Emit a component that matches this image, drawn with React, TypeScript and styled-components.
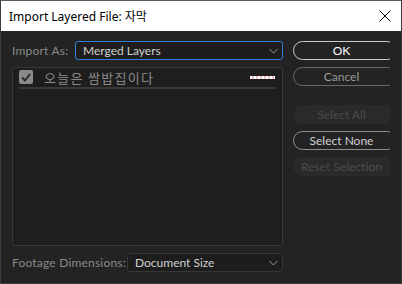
import React from "react";
import styled, { createGlobalStyle } from "styled-components";

const Global = createGlobalStyle`
  html, body { margin: 0; padding: 0; background: #232323; }
  * { box-sizing: border-box; }
`;

const Window = styled.div`
  width: 402px;
  height: 284px;
  border: 1px solid #3c3c3c;
  border-top-color: #5a5a5a;
  background: #232323;
  display: flex;
  flex-direction: column;
  overflow: hidden;
`;

const TitleBar = styled.div`
  height: 30px;
  background: #ffffff;
  display: flex;
  align-items: center;
  justify-content: space-between;
  padding: 0 9px 0 8px;
  font-family: "Noto Sans", "Noto Sans CJK KR", sans-serif;
  font-size: 12px;
  color: #000;
`;

const CloseIcon = styled.svg`
  width: 12px;
  height: 12px;
  margin-right: 1px;
`;

const Body = styled.div`
  flex: 1;
  display: flex;
  gap: 10px;
  padding: 10px 0 0 11px;
  font-family: "Lato", "Noto Sans CJK KR", sans-serif;
  font-size: 12px;
`;

const LeftCol = styled.div`
  width: 271px;
  display: flex;
  flex-direction: column;
  gap: 7px;
`;

const FieldRow = styled.div`
  display: flex;
  align-items: center;
  height: 19px;
`;

const Label = styled.span<{ $w: number }>`
  width: ${(p) => p.$w}px;
  color: #8a8a8a;
  font-size: 12px;
  letter-spacing: 0.2px;
`;

const Select = styled.div<{ $focus?: boolean }>`
  flex: 1;
  height: 19px;
  border: 1px solid ${(p) => (p.$focus ? "#2f7fd8" : "#363636")};
  border-radius: 3px;
  background: #1d1d1d;
  display: flex;
  align-items: center;
  justify-content: space-between;
  padding: 0 4px 0 7px;
  color: #d0d0d0;
  font-size: 12px;
`;

const Chevron = styled.svg`
  width: 9px;
  height: 6px;
`;

const ListBox = styled.div`
  height: 179px;
  border: 1px solid #383838;
  border-radius: 2px;
  background: #1e1e1e;
  padding: 1px 6px 0 6px;
`;

const LayerRow = styled.div`
  height: 16px;
  display: flex;
  align-items: center;
  border-bottom: 2px solid #393939;
  padding-bottom: 2px;
  box-sizing: content-box;
`;

const Check = styled.div`
  width: 14px;
  height: 14px;
  border-radius: 2px;
  background: #8a8a8a;
  display: flex;
  align-items: center;
  justify-content: center;
  margin-right: 11px;
`;

const LayerName = styled.span`
  flex: 1;
  color: #8a8a8a;
  font-family: "Noto Sans CJK KR", sans-serif;
  font-size: 13px;
  letter-spacing: 1.3px;
`;

const Thumb = styled.div`
  width: 25px;
  height: 3px;
  margin-right: 1px;
  margin-top: 1px;
  background: repeating-linear-gradient(90deg, #ffffff 0 2px, #f0c4c4 2px 4px);
`;

const RightCol = styled.div`
  width: 97px;
  overflow: hidden;
  display: flex;
  flex-direction: column;
  gap: 7px;
`;

const Btn = styled.div<{ $variant: "primary" | "normal" | "disabled" | "active"; $gapTop?: number }>`
  width: 104px;
  height: 19px;
  border-radius: 10px;
  display: flex;
  align-items: center;
  justify-content: center;
  padding-right: 7px;
  font-size: 12px;
  margin-top: ${(p) => p.$gapTop ?? 0}px;
  border: 1px solid
    ${(p) =>
      p.$variant === "primary"
        ? "#c9c9c9"
        : p.$variant === "active"
        ? "#8e8e8e"
        : p.$variant === "normal"
        ? "#6a6a6a"
        : "#2a2a2a"};
  background: ${(p) => (p.$variant === "disabled" ? "#2a2a2a" : "transparent")};
  color: ${(p) =>
    p.$variant === "primary"
      ? "#ffffff"
      : p.$variant === "active"
      ? "#cfcfcf"
      : p.$variant === "normal"
      ? "#9a9a9a"
      : "#4a4a4a"};
`;

export default function App() {
  return (
    <>
      <Global />
      <Window>
        <TitleBar>
          <span>Import Layered File: 자막</span>
          <CloseIcon viewBox="0 0 12 12">
            <path d="M0.5 0.5 L11.5 11.5 M11.5 0.5 L0.5 11.5" stroke="#000" strokeWidth="1" />
          </CloseIcon>
        </TitleBar>
        <Body>
          <LeftCol>
            <FieldRow>
              <Label $w={63}>Import As:</Label>
              <Select $focus>
                <span>Merged Layers</span>
                <Chevron viewBox="0 0 9 6">
                  <path d="M0.5 1 L4.5 5 L8.5 1" stroke="#9a9a9a" strokeWidth="1" fill="none" />
                </Chevron>
              </Select>
            </FieldRow>
            <ListBox>
              <LayerRow>
                <Check>
                  <svg width="10" height="9" viewBox="0 0 10 9">
                    <path d="M1 4.5 L4 7.5 L9 1" stroke="#2a2a2a" strokeWidth="2" fill="none" />
                  </svg>
                </Check>
                <LayerName>오늘은 쌈밥집이다</LayerName>
                <Thumb />
              </LayerRow>
            </ListBox>
            <FieldRow>
              <Label $w={115}>Footage Dimensions:</Label>
              <Select>
                <span>Document Size</span>
                <Chevron viewBox="0 0 9 6">
                  <path d="M0.5 1 L4.5 5 L8.5 1" stroke="#9a9a9a" strokeWidth="1" fill="none" />
                </Chevron>
              </Select>
            </FieldRow>
          </LeftCol>
          <RightCol>
            <Btn $variant="primary">OK</Btn>
            <Btn $variant="normal">Cancel</Btn>
            <Btn $variant="disabled" $gapTop={12}>Select All</Btn>
            <Btn $variant="active">Select None</Btn>
            <Btn $variant="disabled">Reset Selection</Btn>
          </RightCol>
        </Body>
      </Window>
    </>
  );
}
